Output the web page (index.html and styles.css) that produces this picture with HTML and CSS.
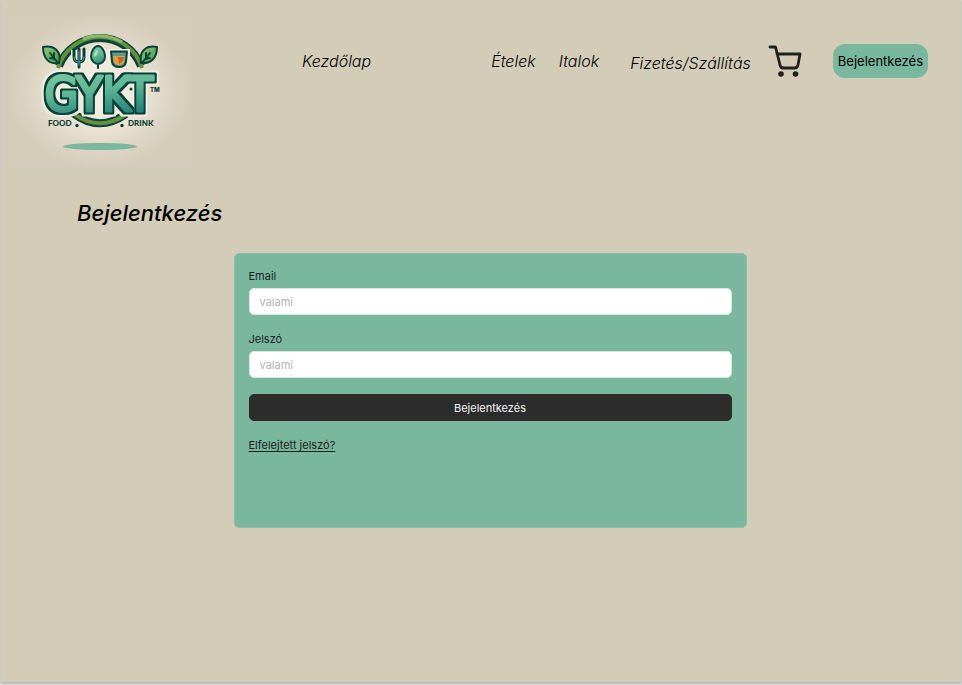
FILE: index.html
```html
<!DOCTYPE html>
<html lang="hu">
<head>
<meta charset="utf-8">
<meta name="viewport" content="width=device-width, initial-scale=1">
<title>Bejelentkezés</title>
<link rel="stylesheet" href="styles.css">
</head>
<body>
<div class="page">
  <header class="header">
    <svg class="logo" viewBox="9 15 182 153" role="img" aria-label="GYKT Food Drink">
      <defs>
        <radialGradient id="glow">
          <stop offset="0" stop-color="#f6f1e8"/>
          <stop offset="0.4" stop-color="#eee7da"/>
          <stop offset="0.75" stop-color="#ded6c4"/>
          <stop offset="1" stop-color="#d5cdb9"/>
        </radialGradient>
        <linearGradient id="mint" x1="0" y1="0" x2="0.3" y2="1">
          <stop offset="0" stop-color="#80cca2"/>
          <stop offset="0.5" stop-color="#62b795"/>
          <stop offset="1" stop-color="#238378"/>
        </linearGradient>
        <linearGradient id="leaf" x1="0" y1="0" x2="1" y2="1">
          <stop offset="0" stop-color="#8dc780"/>
          <stop offset="1" stop-color="#4c963f"/>
        </linearGradient>
        <filter id="outline" x="-10%" y="-20%" width="120%" height="140%" color-interpolation-filters="sRGB">
          <feMorphology in="SourceAlpha" operator="dilate" radius="4" result="wide"/>
          <feFlood flood-color="#f2ebdf"/>
          <feComposite in2="wide" operator="in" result="halo"/>
          <feMorphology in="SourceAlpha" operator="dilate" radius="2" result="near"/>
          <feFlood flood-color="#07423a"/>
          <feComposite in2="near" operator="in" result="edge"/>
          <feMerge>
            <feMergeNode in="halo"/>
            <feMergeNode in="edge"/>
            <feMergeNode in="SourceGraphic"/>
          </feMerge>
        </filter>
      </defs>
      <rect x="9" y="15" width="182" height="153" fill="url(#glow)"/>
      <g fill="none">
        <path class="ring-edge" d="M59 66A44 44 0 0 1 141 66"/>
        <path class="ring" d="M58 68A44 44 0 0 1 142 68"/>
        <path class="ring-light" d="M83 39A44 44 0 0 1 122 42"/>
        <path class="ring-edge" d="M73 113Q99 133 126 114"/>
        <path class="ring" d="M74 114Q99 132 125 115"/>
      </g>
      <g class="outline" fill="url(#leaf)">
        <path d="M43 47C54 45 62 51 59 63C49 65 43 58 43 47Z"/>
        <path d="M157 47C146 45 139 51 141 63C151 64 157 58 157 47Z"/>
        <path d="M50 53L58 63M54 58L54 53M55 59L50 58M150 53L142 63M146 58L146 53M145 59L150 58" fill="none"/>
      </g>
      <path class="halo" d="M74 50V60Q79 68 84 60V50M98 46C87 52 91 64 98 65C107 62 106 50 98 46M111 52H127V60Q119 73 111 60Z"/>
      <path class="fork-edge" d="M74 49V57Q74 62 79 62Q84 62 84 57V49M79 49V67"/>
      <path class="fork" d="M74 57Q74 62 79 62Q84 62 84 57M79 51V65"/>
      <path class="outline" d="M98 46C94 46 91 52 91 56C91 61 95 64 98 64C102 64 105 61 105 56C105 52 102 46 98 46ZM98 64V68" fill="url(#mint)"/>
      <path d="M94 57Q94 51 98 50Q98 55 94 57Z" fill="#b4e3c3"/>
      <path class="outline" d="M111 51.500H127L126 62Q125 67 119 67Q113 67 112 62Z" fill="#579c91"/>
      <path d="M113 56H125L124 62Q123 65 119 65Q115 65 114 62Z" fill="#e99a3c"/>
      <path d="M118 57H124L123 61L119 64Z" fill="#bf681f"/>
      <text class="name" x="99" y="111" text-anchor="middle">GYKT</text>
      <circle cx="131" cy="89" r="1.500" fill="#063f3a"/>
      <text class="mark" x="150" y="92">TM</text>
      <text class="tag" x="48" y="126">FOOD</text>
      <text class="tag" x="128" y="126">DRINK</text>
      <circle cx="77" cy="125.500" r="1.700" fill="#073b35"/>
      <circle cx="122" cy="125.500" r="1.700" fill="#073b35"/>
      <ellipse cx="100" cy="146.500" rx="37" ry="3.500" fill="#79b79e"/>
    </svg>
    <nav class="nav" aria-label="Főmenü">
      <a class="nav-link" href="#">Kezdőlap</a>
      <div class="nav-group">
        <a class="nav-link" href="#">Ételek</a>
        <a class="nav-link" href="#">Italok</a>
        <a class="nav-link nav-pay" href="#">Fizetés/Szállítás</a>
        <a class="cart" href="#" aria-label="Kosár">
          <svg viewBox="0 0 34 34" aria-hidden="true">
            <path d="M2 3H7.500L12 21Q12.500 24 15.500 24H26.500Q29.500 24 30 21L32 10H9" fill="none" stroke="#202020" stroke-width="2.800" stroke-linecap="round" stroke-linejoin="round"/>
            <circle cx="13" cy="30" r="2.800" fill="#202020"/>
            <circle cx="27.500" cy="30" r="2.800" fill="#202020"/>
          </svg>
        </a>
        <button class="login" type="button">Bejelentkezés</button>
      </div>
    </nav>
  </header>
  <main class="main">
    <h1 class="title">Bejelentkezés</h1>
    <form class="card">
      <div class="field">
        <label for="email">Email</label>
        <input id="email" type="email" placeholder="valami">
      </div>
      <div class="field">
        <label for="password">Jelszó</label>
        <input id="password" type="password" placeholder="valami">
      </div>
      <button class="submit" type="button">Bejelentkezés</button>
      <a class="forgot" href="#">Elfelejtett jelszó?</a>
    </form>
  </main>
</div>
</body>
</html>
```
FILE: styles.css
```css
* { box-sizing: border-box; }

body {
  margin: 0;
  padding: 0 1px 3px;
  background: #d6d6d6;
  color: #000;
  font-family: Inter, "Liberation Sans", sans-serif;
}

.page {
  min-height: calc(100vh - 3px);
  background: #d3ccb6;
  box-shadow: 0 1px 2px #aaa;
}

.header {
  display: flex;
  align-items: flex-start;
  padding: 15px 33px 0 8px;
}

.logo { width: 182px; height: 153px; flex: none; }
.ring-edge { stroke: #0b4336; stroke-width: 8px; }
.ring { stroke: #62913f; stroke-width: 4px; }
.ring-light { stroke: #8cba70; stroke-width: 3px; }
.outline { stroke: #07423a; stroke-width: 2px; stroke-linejoin: round; stroke-linecap: round; }
.halo { fill: none; stroke: #f5efe5; stroke-width: 6px; }
.fork-edge { fill: none; stroke: #07423a; stroke-width: 3px; stroke-linecap: round; }
.fork { fill: none; stroke: #53a38d; stroke-width: 1px; stroke-linecap: round; }
.name {
  fill: url(#mint);
  stroke: url(#mint);
  stroke-width: 3px;
  stroke-linejoin: round;
  filter: url(#outline);
  font-family: "DejaVu Sans Condensed", "DejaVu Sans", sans-serif;
  font-size: 48px;
  font-weight: 400;
}
.mark { fill: #073b35; font-size: 6px; font-weight: 800; }
.tag { fill: #073b35; font-family: Lato, sans-serif; font-size: 8px; font-weight: 900; }

.nav {
  display: flex;
  flex: 1;
  align-items: center;
  justify-content: space-between;
  margin: 29px 0 0 111px;
}

.nav-group { display: flex; align-items: center; }
.nav-link {
  color: #000;
  font-size: 16px;
  font-style: italic;
  font-weight: 300;
  line-height: 20px;
  text-decoration: none;
}
.nav-group .nav-link { margin-right: 23px; }
.nav-group .nav-pay { margin: 4px 17px 0 8px; }
.cart { width: 34px; height: 34px; margin-right: 31px; }
.cart svg { display: block; }

.login {
  padding: 0 5px;
  height: 34px;
  border: 0;
  border-radius: 12px;
  background: #79b79e;
  color: #000;
  font: 400 13px/20px Inter, sans-serif;
}

.main { padding: 29px 58px 32px 76px; }
.title {
  margin: 0 0 24px;
  font-size: 22px;
  font-style: italic;
  font-weight: 500;
  line-height: 32px;
}

.card {
  display: flex;
  flex-direction: column;
  gap: 16px;
  width: min(100%, 513px);
  min-height: 275px;
  margin: 0 auto;
  padding: 14px;
  border: 1px solid #8dbea9;
  border-radius: 5px;
  background: #79b79e;
  color: #1e1e1e;
  font-size: 11px;
  line-height: 16px;
}

.field { display: flex; flex-direction: column; gap: 4px; }
.field input {
  width: 100%;
  height: 27px;
  padding: 0 10px;
  border: 1px solid #d9e6df;
  border-radius: 5px;
  background: #fff;
  color: #1e1e1e;
  font: 400 11px/16px Inter, sans-serif;
}
.field input::placeholder { color: #b3b3b3; }

.submit {
  height: 27px;
  border: 1px solid #2c2c2c;
  border-radius: 5px;
  background: #2c2c2c;
  color: #f5f5f5;
  font: 400 11px/16px Inter, sans-serif;
}

.forgot {
  align-self: flex-start;
  color: #1e1e1e;
  text-decoration: underline;
  text-underline-offset: 2px;
}
```
